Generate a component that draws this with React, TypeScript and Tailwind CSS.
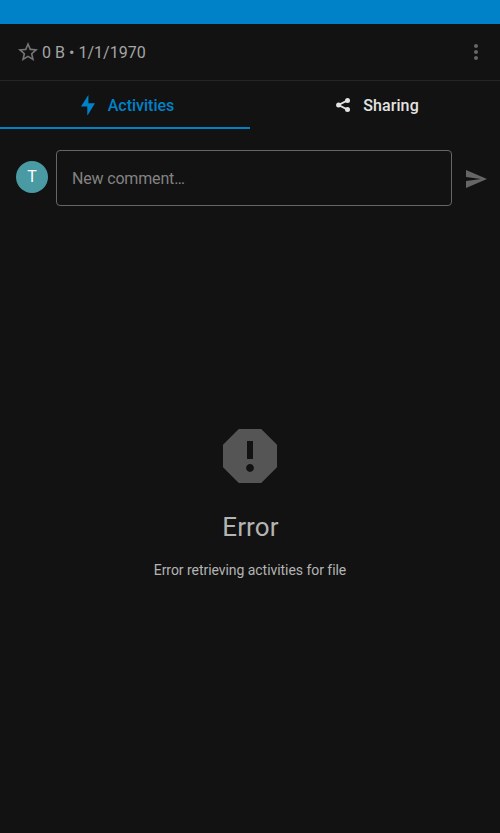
import React from "react";

function Icon({ d, className }: { d: string; className: string }) {
  return (
    <svg viewBox="0 0 24 24" fill="currentColor" className={`shrink-0 ${className}`} aria-hidden="true">
      <path d={d} />
    </svg>
  );
}

const STAR =
  "M22 9.24l-7.19-.62L12 2 9.19 8.63 2 9.24l5.46 4.73L5.82 21 12 17.27 18.18 21l-1.63-7.03L22 9.24zM12 15.4l-3.76 2.27 1-4.28-3.32-2.88 4.38-.38L12 6.1l1.71 4.04 4.38.38-3.32 2.88 1 4.28L12 15.4z";
const MORE =
  "M12 8c1.1 0 2-.9 2-2s-.9-2-2-2-2 .9-2 2 .9 2 2 2zm0 2c-1.1 0-2 .9-2 2s.9 2 2 2 2-.9 2-2-.9-2-2-2zm0 6c-1.1 0-2 .9-2 2s.9 2 2 2 2-.9 2-2-.9-2-2-2z";
const SEND = "M2.01 21L23 12 2.01 3 2 10l15 2-15 2z";
const REPORT =
  "M15.73 3H8.27L3 8.27v7.46L8.27 21h7.46L21 15.73V8.27L15.73 3zM12 17.3c-.72 0-1.3-.58-1.3-1.3 0-.72.58-1.3 1.3-1.3.72 0 1.3.58 1.3 1.3 0 .72-.58 1.3-1.3 1.3zm1-4.3h-2V7h2v6z";
const BOLT = "M12.3 2L5 13.5h6.3V22h.5L19 10.2h-6.6V2z";

function ShareIcon() {
  return (
    <svg viewBox="0 0 24 24" className="size-6 shrink-0" fill="currentColor" aria-hidden="true">
      <path d="M16.5 7.4L7.6 12l8.9 4.6" fill="none" stroke="currentColor" strokeWidth="1.8" />
      <circle cx="16.5" cy="7.4" r="2.5" />
      <circle cx="7.6" cy="12" r="2.5" />
      <circle cx="16.5" cy="16.6" r="2.5" />
    </svg>
  );
}

export default function App() {
  return (
    <div className="flex h-screen flex-col bg-[#121212] font-['Roboto',sans-serif] text-[#a5a5a5]">
      <div className="h-6 shrink-0 bg-[#0082c9]" />
      <header className="flex h-[57px] shrink-0 items-center border-b border-[#252525] px-4 pr-3">
        <Icon d={STAR} className="size-6 text-[#757575]" />
        <span className="ml-0.5 pt-0.5 text-base tracking-[0.03px]">0 B • 1/1/1970</span>
        <Icon d={MORE} className="ml-auto size-6 text-[#666666]" />
      </header>
      <nav className="grid h-12 shrink-0 grid-cols-2 text-base font-medium">
        <div className="flex items-center justify-center gap-2 border-b-2 border-[#0082c9] pt-0.5 text-[#0082c9]">
          <Icon d={BOLT} className="size-6" />
          <span className="pt-0.5">Activities</span>
        </div>
        <div className="flex items-center justify-center gap-2 text-[#e3e3e3]">
          <ShareIcon />
          <span className="pt-0.5 tracking-[0.1px]">Sharing</span>
        </div>
      </nav>
      <div className="flex shrink-0 items-start pt-[21px] pr-3 pl-4">
        <div className="mt-[11px] flex size-8 items-center justify-center rounded-full bg-[#499aa2] text-base text-white">
          T
        </div>
        <div className="ml-2 flex h-14 w-[396px] items-center rounded-[4px] border border-[#666666] px-[15px] pt-0.5 text-base tracking-[-0.17px] text-[#838383]">
          New comment…
        </div>
        <Icon d={SEND} className="mt-[17px] ml-auto size-6 text-[#666666]" />
      </div>
      <main className="flex flex-col items-center pt-[214px]">
        <Icon d={REPORT} className="size-[72px] text-[#555555]" />
        <h1 className="mt-[17px] pl-px text-[26px] leading-9 tracking-[0.15px] text-[#b4b4b4]">Error</h1>
        <p className="mt-[15px] text-sm leading-5 tracking-[-0.05px] text-[#b4b4b4]">Error retrieving activities for file</p>
      </main>
    </div>
  );
}
